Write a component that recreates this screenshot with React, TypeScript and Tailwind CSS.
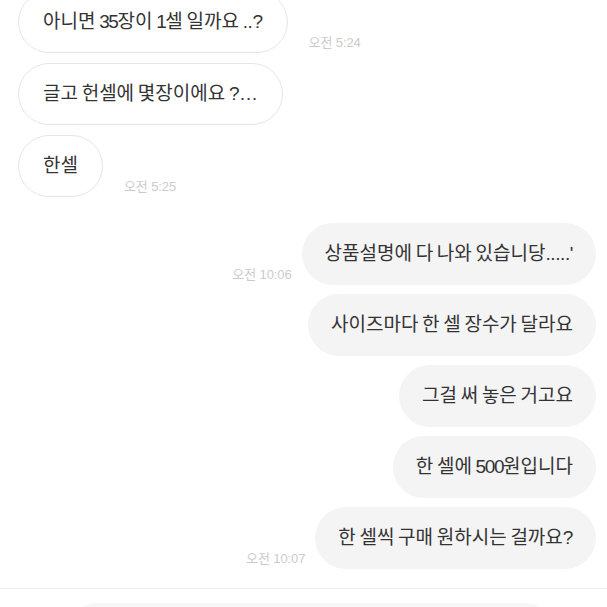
import React from 'react';

type Msg = { text: string; time?: string };

const received: Msg[] = [
  { text: '아니면 35장이 1셀 일까요 ..?', time: '오전 5:24' },
  { text: '글고 헌셀에 몇장이에요 ?…' },
  { text: '한셀', time: '오전 5:25' },
];

const sent: Msg[] = [
  { text: '상품설명에 다 나와 있습니당.....\'', time: '오전 10:06' },
  { text: '사이즈마다 한 셀 장수가 달라요' },
  { text: '그걸 써 놓은 거고요' },
  { text: '한 셀에 500원입니다' },
  { text: '한 셀씩 구매 원하시는 걸까요?', time: '오전 10:07' },
];

// the original font has narrow spaces and digits
function Text({ value }: { value: string }) {
  const parts = value.match(/[가-힣]+|\s+|[0-9]+|[^가-힣\s0-9]+/g) ?? [];
  return (
    <span>
      {parts.map((p, i) => {
        if (/^\s/.test(p))
          return (
            <span key={i} className="tracking-[-1.6px]">
              {p}
            </span>
          );
        if (/^[0-9]/.test(p))
          return (
            <span key={i} className="tracking-[-1.4px]">
              {p}
            </span>
          );
        if (/^[가-힣]/.test(p)) return <span key={i}>{p}</span>;
        return (
          <span key={i} className="tracking-[-0.4px]">
            {p}
          </span>
        );
      })}
    </span>
  );
}

function Time({ value }: { value: string }) {
  return (
    <span className="mb-[4px] text-[13px] leading-none tracking-[-0.1px] text-[#cbcbcb] whitespace-nowrap">
      {value}
    </span>
  );
}

export default function App() {
  return (
    <div
      className="w-[607px] h-[607px] overflow-hidden bg-white flex flex-col"
      style={{ fontFamily: '"Liberation Sans", "Noto Sans CJK KR", sans-serif' }}
    >
      <div className="h-[588px] shrink-0 overflow-hidden">
        <div className="mt-[-9px] flex flex-col">
          <div className="flex flex-col gap-[10px] pl-[18px]">
            {received.map((m, i) => (
              <div key={i} className="flex items-end gap-[21px]">
                <div className="h-[62px] px-[24px] flex items-center rounded-[31px] border border-[#e6e6e6] bg-white text-[19px] text-[#333] whitespace-nowrap">
                  <Text value={m.text} />
                </div>
                {m.time && <Time value={m.time} />}
              </div>
            ))}
          </div>

          <div className="mt-[26px] flex flex-col gap-[9px] pr-[11px]">
            {sent.map((m, i) => (
              <div key={i} className="flex items-end justify-end gap-[10px]">
                {m.time && <Time value={m.time} />}
                <div className="h-[62px] px-[23px] flex items-center rounded-[31px] bg-[#f4f4f4] text-[19px] text-[#333] whitespace-nowrap">
                  <Text value={m.text} />
                </div>
              </div>
            ))}
          </div>
        </div>
      </div>

      <div className="flex-1 border-t border-[#ededed] bg-white pt-[14px] pl-[72px] pr-[57px]">
        <div className="h-[30px] rounded-t-[24px] bg-[#f7f7f7]" />
      </div>
    </div>
  );
}
